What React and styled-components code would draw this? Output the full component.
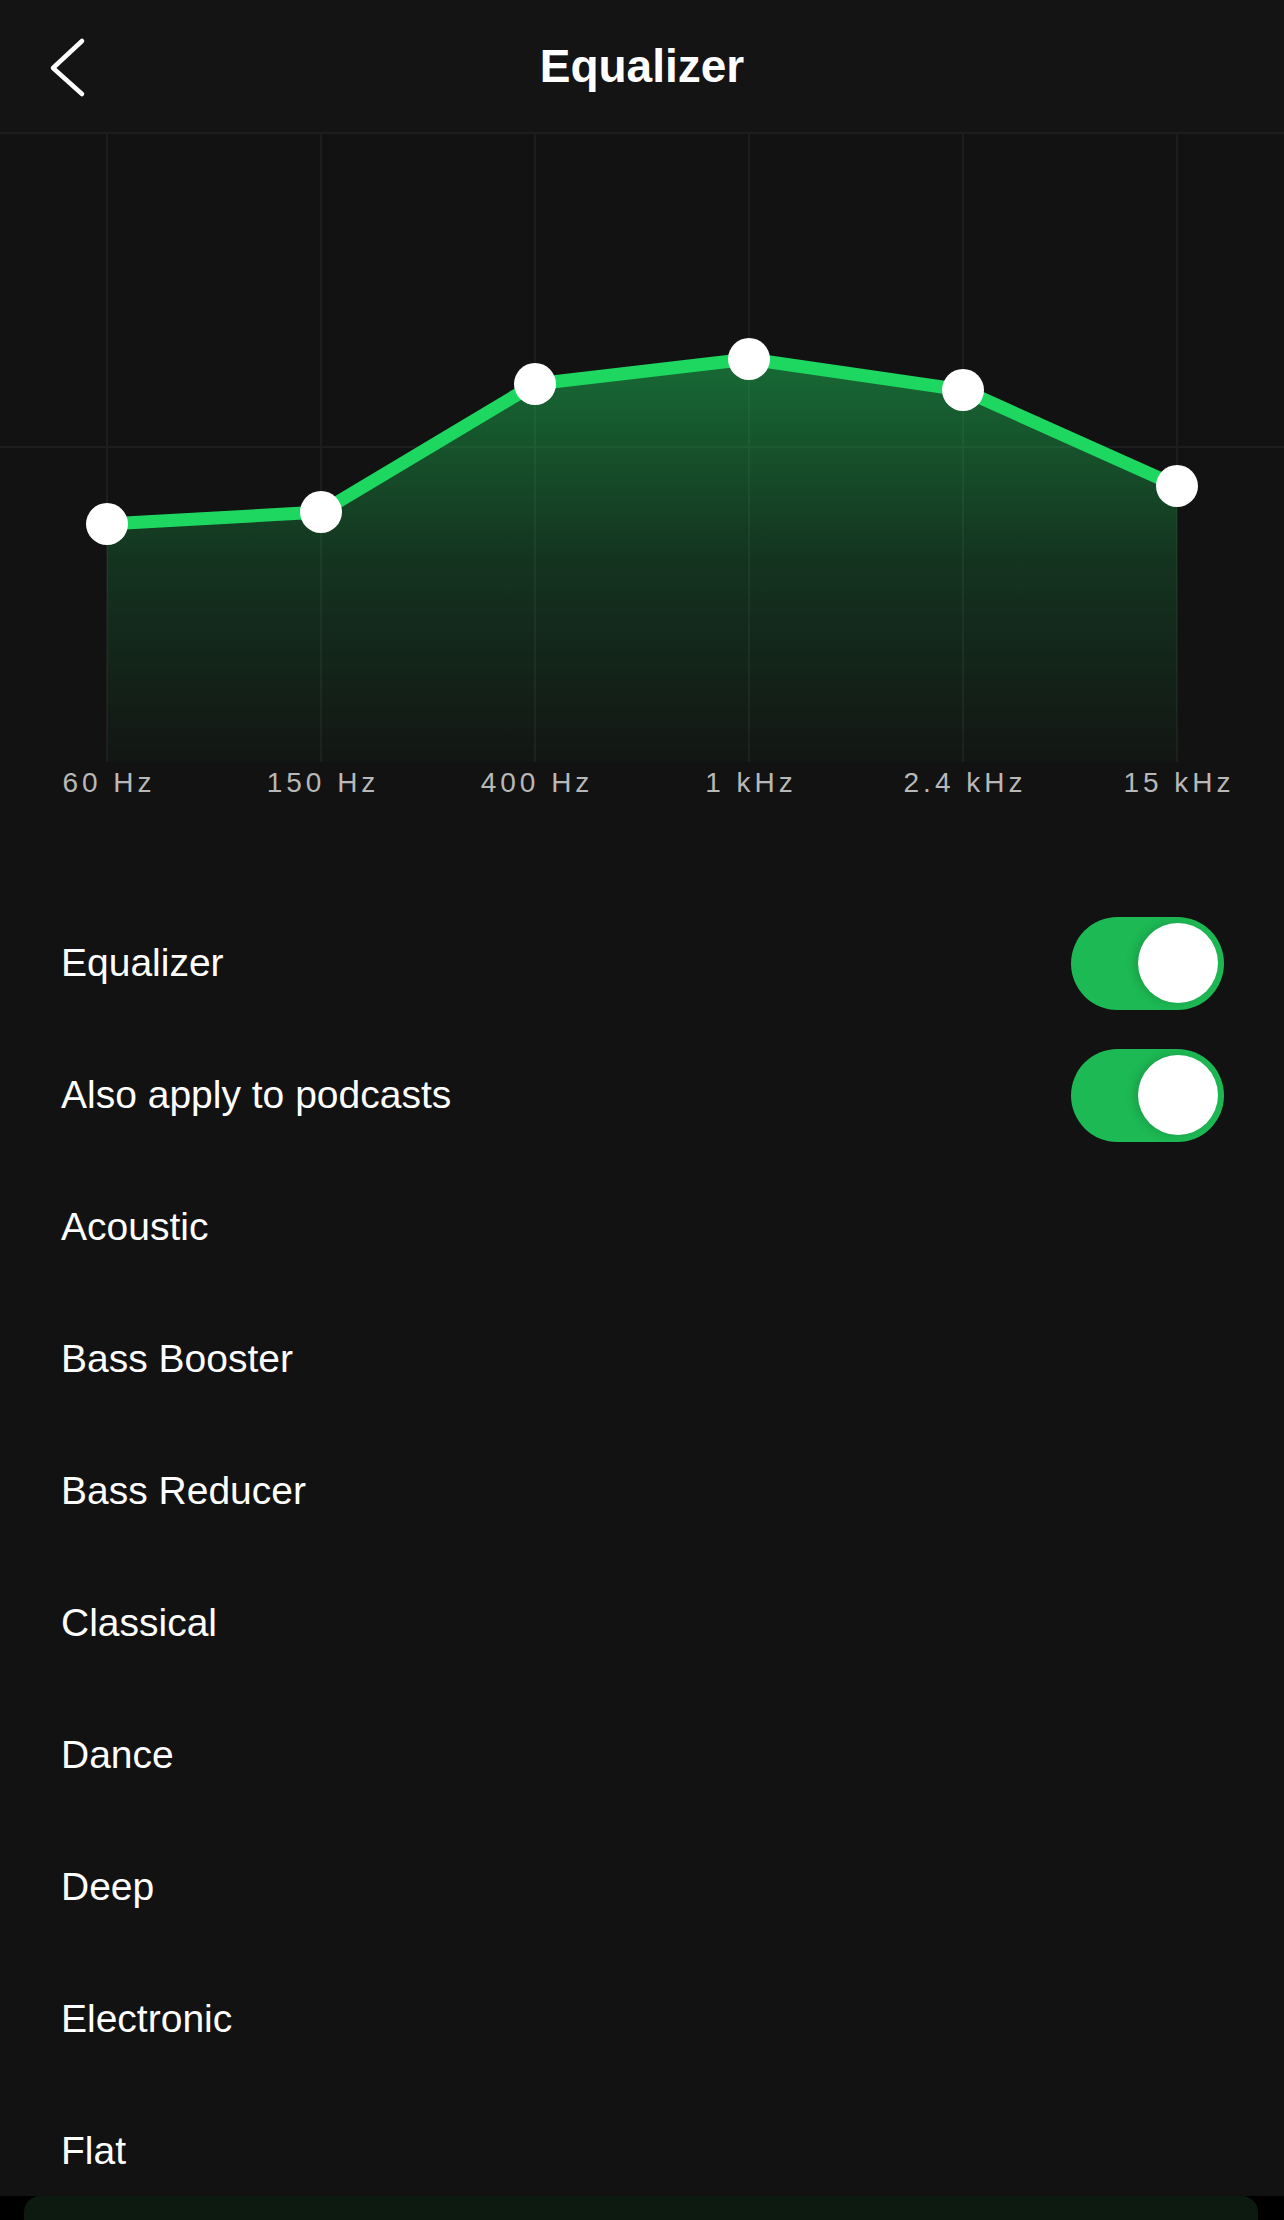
import styled, { createGlobalStyle } from 'styled-components';

const GlobalStyle = createGlobalStyle`
  html, body {
    margin: 0;
    padding: 0;
    background: #000;
  }
  body {
    font-family: "Liberation Sans", Arial, sans-serif;
    -webkit-font-smoothing: antialiased;
  }
`;

const GREEN = '#1ed760';
const CHART_H = 630;

const BANDS = [
  { label: '60 Hz', x: 107, y: 392 },
  { label: '150 Hz', x: 321, y: 380 },
  { label: '400 Hz', x: 535, y: 252 },
  { label: '1 kHz', x: 749, y: 227 },
  { label: '2.4 kHz', x: 963, y: 258 },
  { label: '15 kHz', x: 1177, y: 354 },
];

const PRESETS = [
  'Acoustic',
  'Bass Booster',
  'Bass Reducer',
  'Classical',
  'Dance',
  'Deep',
  'Electronic',
  'Flat',
];

const Screen = styled.div`
  width: 1284px;
  height: 2220px;
  display: flex;
  flex-direction: column;
  background: #121212;
  overflow: hidden;
`;

const Header = styled.header`
  height: 132px;
  flex-shrink: 0;
  display: grid;
  grid-template-columns: 1fr auto 1fr;
  align-items: center;
  background: #141414;
`;

const BackButton = styled.button`
  justify-self: start;
  display: flex;
  padding: 0 0 0 38px;
  border: 0;
  background: none;
  cursor: pointer;
`;

const Title = styled.h1`
  margin: 0;
  font-size: 46px;
  line-height: 1;
  font-weight: 700;
  color: #fff;
`;

const ChartBox = styled.div`
  height: ${CHART_H}px;
  flex-shrink: 0;
  svg {
    display: block;
  }
`;

const Labels = styled.div`
  display: grid;
  grid-template-columns: repeat(6, 1fr);
  height: 42px;
  flex-shrink: 0;
`;

const Label = styled.span`
  text-align: center;
  padding-left: 4px;
  font-size: 28px;
  line-height: 42px;
  letter-spacing: 4px;
  color: #b8b8b8;
`;

const List = styled.ul`
  list-style: none;
  margin: 93px 0 0;
  padding: 0;
  flex: 1;
  min-height: 0;
  overflow: hidden;
`;

const Row = styled.li`
  height: 132px;
  display: flex;
  align-items: center;
  justify-content: space-between;
  padding: 0 60px 0 61px;
  font-size: 39px;
  color: #fff;
`;

const Switch = styled.button`
  width: 153px;
  height: 93px;
  display: flex;
  align-items: center;
  justify-content: ${(p) => (p.$on ? 'flex-end' : 'flex-start')};
  padding: 0 6px;
  border: 0;
  border-radius: 47px;
  background: ${(p) => (p.$on ? '#1db954' : '#535353')};
  cursor: pointer;
`;

const Knob = styled.span`
  width: 80px;
  height: 80px;
  border-radius: 50%;
  background: #fff;
  box-shadow: -4px 0 10px rgba(0, 0, 0, 0.14);
`;

const BottomBar = styled.div`
  height: 24px;
  flex-shrink: 0;
  display: flex;
  padding: 0 26px 0 24px;
  background: #000;
`;

const MiniPlayer = styled.div`
  flex: 1;
  border-radius: 16px 16px 0 0;
  background: #0c1a10;
`;

const Chevron = () => (
  <svg width="60" height="70" viewBox="0 0 60 70">
    <polyline
      points="44,10 15,37 44,63"
      fill="none"
      stroke="#fff"
      strokeWidth="4.5"
      strokeLinecap="round"
      strokeLinejoin="round"
    />
  </svg>
);

const EqChart = () => {
  const pts = BANDS.map((b) => `${b.x},${b.y}`).join(' ');
  const first = BANDS[0];
  const last = BANDS[BANDS.length - 1];
  return (
    <svg width="1284" height={CHART_H} viewBox={`0 0 1284 ${CHART_H}`}>
      <defs>
        <linearGradient id="eqFill" x1="0" y1="0" x2="0" y2="1">
          <stop offset="0" stopColor={GREEN} stopOpacity="0.45" />
          <stop offset="0.5" stopColor={GREEN} stopOpacity="0.17" />
          <stop offset="1" stopColor={GREEN} stopOpacity="0.02" />
        </linearGradient>
      </defs>
      <line x1="0" y1="1" x2="1284" y2="1" stroke="#1d1d1d" strokeWidth="2" />
      <line x1="0" y1="315" x2="1284" y2="315" stroke="#1d1d1d" strokeWidth="2" />
      {BANDS.map((b) => (
        <line key={b.label} x1={b.x} y1="0" x2={b.x} y2={CHART_H} stroke="#1d1d1d" strokeWidth="2" />
      ))}
      <polygon
        points={`${first.x},${CHART_H} ${pts} ${last.x},${CHART_H}`}
        fill="url(#eqFill)"
      />
      <polyline
        points={pts}
        fill="none"
        stroke={GREEN}
        strokeWidth="13"
        strokeLinejoin="round"
        strokeLinecap="round"
      />
      {BANDS.map((b) => (
        <circle key={b.label} cx={b.x} cy={b.y} r="21" fill="#fff" />
      ))}
    </svg>
  );
};

export default function App() {
  return (
    <>
      <GlobalStyle />
      <Screen>
        <Header>
          <BackButton aria-label="Back">
            <Chevron />
          </BackButton>
          <Title>Equalizer</Title>
          <span />
        </Header>
        <ChartBox>
          <EqChart />
        </ChartBox>
        <Labels>
          {BANDS.map((b) => (
            <Label key={b.label}>{b.label}</Label>
          ))}
        </Labels>
        <List>
          <Row>
            Equalizer
            <Switch $on aria-label="Equalizer">
              <Knob />
            </Switch>
          </Row>
          <Row>
            Also apply to podcasts
            <Switch $on aria-label="Also apply to podcasts">
              <Knob />
            </Switch>
          </Row>
          {PRESETS.map((name) => (
            <Row key={name}>{name}</Row>
          ))}
        </List>
        <BottomBar>
          <MiniPlayer />
        </BottomBar>
      </Screen>
    </>
  );
}
